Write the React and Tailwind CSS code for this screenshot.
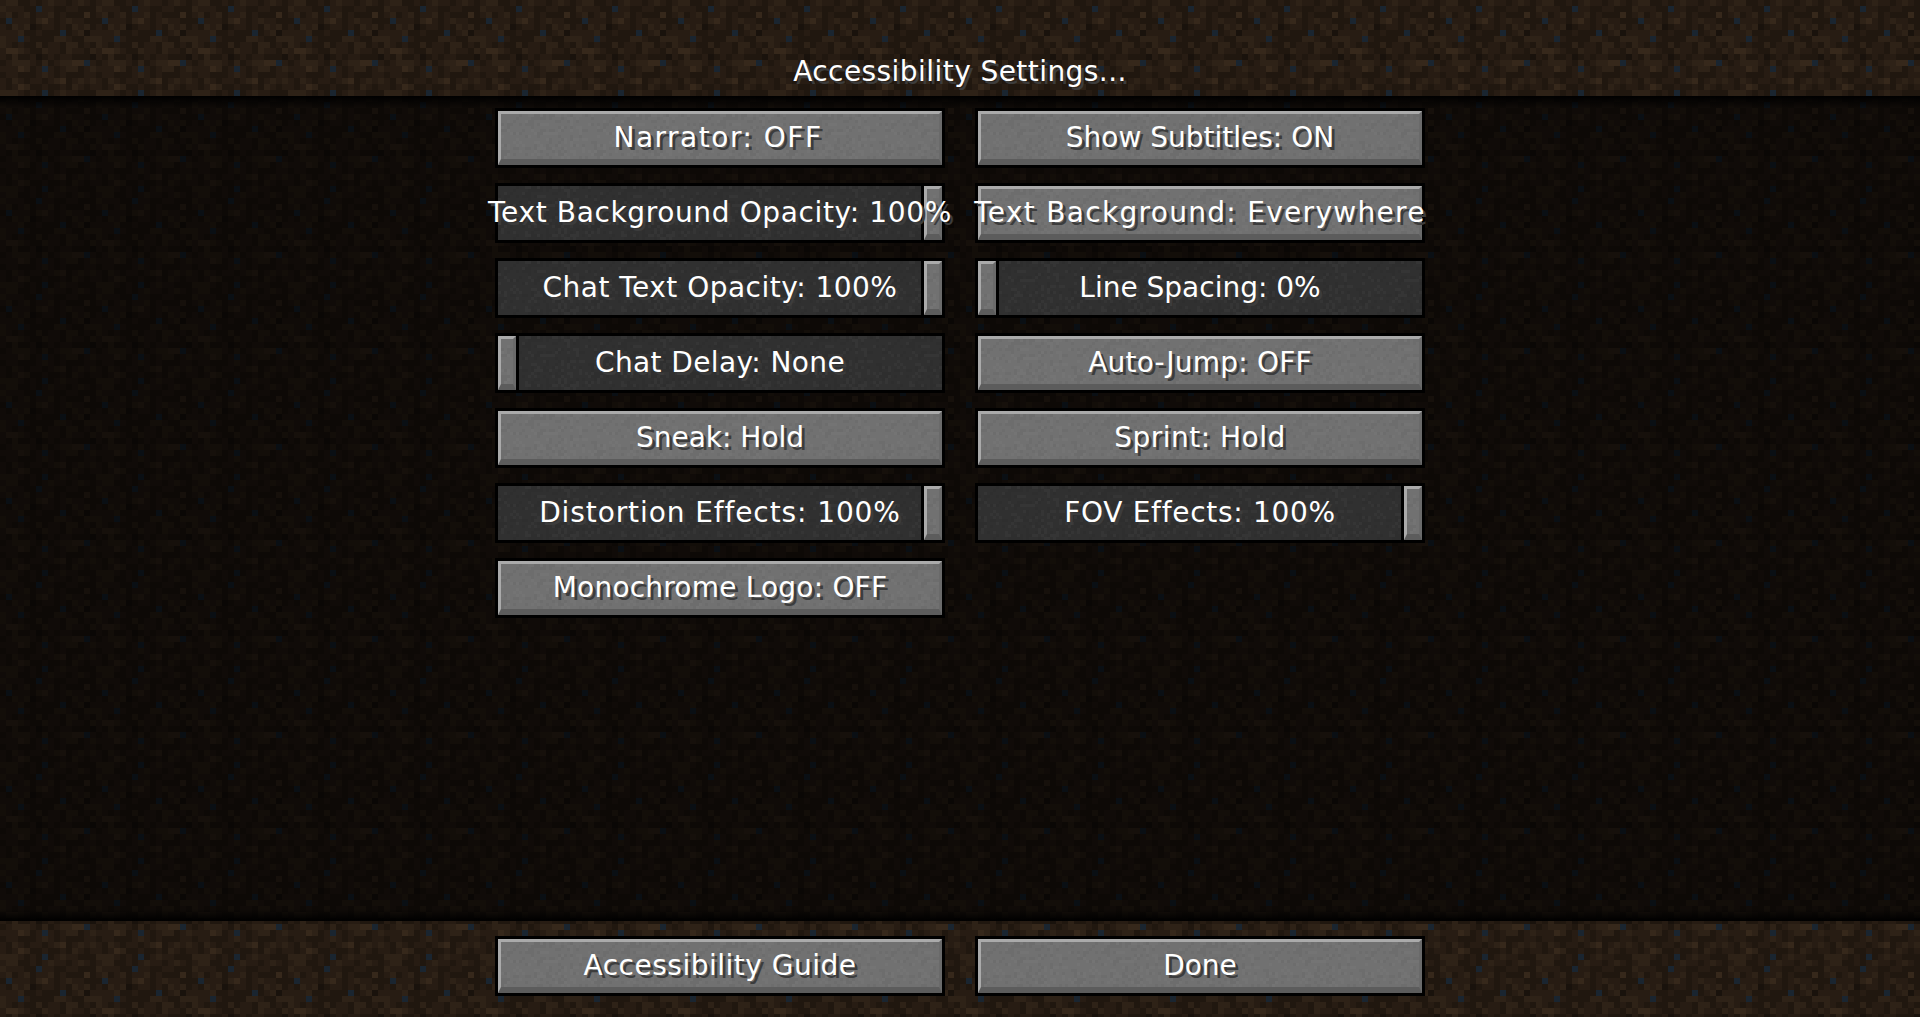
import React from 'react';

// dirt tile, 16x16 cells of 6px each
const dirtRows = [
  "2331121232212321",
  "322211b221122111",
  "2312312231211141",
  "1b22213421232211",
  "2132301221213231",
  "2223112111b12302",
  "322b211113321133",
  "3212113122133121",
  "2443211322132213",
  "2131120121221110",
  "12333213123344b2",
  "2224312b21233123",
  "1221112321211122",
  "2132122123412323",
  "2124311211213212",
  "3332121b12322111",
];

const dirtColors = {
  0: "#19120c",
  1: "#20170f",
  2: "#271c13",
  3: "#2e2217",
  4: "#36281b",
  b: "#1a2530",
};

// stone grain for the widgets, 3px cells
const grain = [];
let seed = 7;
for (let y = 0; y < 16; y++) {
  for (let x = 0; x < 32; x++) {
    seed = (seed * 16807) % 2147483647;
    const v = seed % 100;
    if (v < 20) grain.push({ x, y, fill: "#000000", o: 0.035 });
    else if (v > 80) grain.push({ x, y, fill: "#ffffff", o: 0.025 });
  }
}

function Patterns() {
  return (
    <svg width="0" height="0" className="absolute">
      <defs>
        <pattern id="dirt" width="96" height="96" patternUnits="userSpaceOnUse">
          {dirtRows.map((row, y) =>
            row.split("").map((c, x) => (
              <rect key={`${x}-${y}`} x={x * 6} y={y * 6} width="6" height="6" fill={dirtColors[c]} />
            ))
          )}
        </pattern>
        <pattern id="grain" width="96" height="48" patternUnits="userSpaceOnUse">
          {grain.map((g, i) => (
            <rect key={i} x={g.x * 3} y={g.y * 3} width="3" height="3" fill={g.fill} opacity={g.o} />
          ))}
        </pattern>
      </defs>
    </svg>
  );
}

function Dirt({ offset = 0, dim = false }) {
  return (
    <svg className="absolute inset-0 w-full h-full">
      <g transform={`translate(0 ${offset})`}>
        <rect x="0" y="0" width="100%" height="200%" fill="url(#dirt)" />
      </g>
      {dim && <rect x="0" y="0" width="100%" height="100%" fill="#000000" opacity="0.58" />}
    </svg>
  );
}

function Grain() {
  return (
    <svg className="absolute inset-0 w-full h-full">
      <rect x="0" y="0" width="100%" height="100%" fill="url(#grain)" />
    </svg>
  );
}

function Label({ children, tracking }) {
  return (
    <span className={`relative z-10 whitespace-nowrap text-white text-[28px] leading-none font-['DejaVu_Sans',sans-serif] [text-shadow:3px_3px_0_#3c3c3c] ${tracking}`}>
      {children}
    </span>
  );
}

function Bevel({ className = "" }) {
  return (
    <div className={`absolute border-t-[3px] border-l-[3px] border-b-[6px] border-r-[3px] border-t-[#aaaaaa] border-l-[#aaaaaa] border-b-[#5c5c5c] border-r-[#6a6a6a] bg-[#717171] ${className}`}>
      <Grain />
    </div>
  );
}

function Button({ label, tracking }) {
  return (
    <div className="relative h-[60px] border-[3px] border-black flex items-center justify-center pb-px">
      <Bevel className="inset-0" />
      <Label tracking={tracking}>{label}</Label>
    </div>
  );
}

function Slider({ label, tracking, at }) {
  return (
    <div className="relative h-[60px] border-[3px] border-black bg-[#303030] flex items-center justify-center pb-px">
      <Grain />
      {at === "left" ? (
        <div className="absolute left-0 inset-y-0 w-[21px] border-r-[3px] border-black">
          <Bevel className="inset-0" />
        </div>
      ) : (
        <div className="absolute right-0 inset-y-0 w-[21px] border-l-[3px] border-black">
          <Bevel className="inset-0" />
        </div>
      )}
      <Label tracking={tracking}>{label}</Label>
    </div>
  );
}

const options = [
  { type: "button", label: "Narrator: OFF", tracking: "tracking-[1.5px] pr-[4px]" },
  { type: "button", label: "Show Subtitles: ON", tracking: "" },
  { type: "slider", label: "Text Background Opacity: 100%", at: "right", tracking: "tracking-[0.63px]" },
  { type: "button", label: "Text Background: Everywhere", tracking: "tracking-[1.3px]" },
  { type: "slider", label: "Chat Text Opacity: 100%", at: "right", tracking: "tracking-[0.48px]" },
  { type: "slider", label: "Line Spacing: 0%", at: "left", tracking: "" },
  { type: "slider", label: "Chat Delay: None", at: "left", tracking: "tracking-[0.38px]" },
  { type: "button", label: "Auto-Jump: OFF", tracking: "tracking-[0.2px]" },
  { type: "button", label: "Sneak: Hold", tracking: "" },
  { type: "button", label: "Sprint: Hold", tracking: "tracking-[0.5px]" },
  { type: "slider", label: "Distortion Effects: 100%", at: "right", tracking: "tracking-[0.9px]" },
  { type: "slider", label: "FOV Effects: 100%", at: "right", tracking: "tracking-[0.7px]" },
  { type: "button", label: "Monochrome Logo: OFF", tracking: "tracking-[0.2px]" },
];

export default function App() {
  return (
    <div className="h-screen w-full flex flex-col overflow-hidden bg-black">
      <Patterns />

      <header className="relative h-24 shrink-0 flex justify-center pt-[58px]">
        <Dirt />
        <Label tracking="tracking-[0.44px]">Accessibility Settings...</Label>
      </header>

      <main className="relative flex-1 min-h-0">
        <Dirt dim />
        <div className="absolute top-0 inset-x-0 h-3 bg-linear-to-b from-black to-transparent"></div>
        <div className="absolute bottom-0 inset-x-0 h-3 bg-linear-to-t from-black to-transparent"></div>
        <div className="relative w-[930px] mx-auto pt-3 grid grid-cols-2 gap-x-[30px] gap-y-[15px]">
          {options.map((o) =>
            o.type === "button" ? (
              <Button key={o.label} label={o.label} tracking={o.tracking} />
            ) : (
              <Slider key={o.label} label={o.label} tracking={o.tracking} at={o.at} />
            )
          )}
        </div>
      </main>

      <footer className="relative h-24 shrink-0 pt-[15px]">
        <Dirt offset={-57} />
        <div className="relative w-[930px] mx-auto grid grid-cols-2 gap-x-[30px]">
          <Button label="Accessibility Guide" tracking="tracking-[0.5px]" />
          <Button label="Done" tracking="" />
        </div>
      </footer>
    </div>
  );
}
